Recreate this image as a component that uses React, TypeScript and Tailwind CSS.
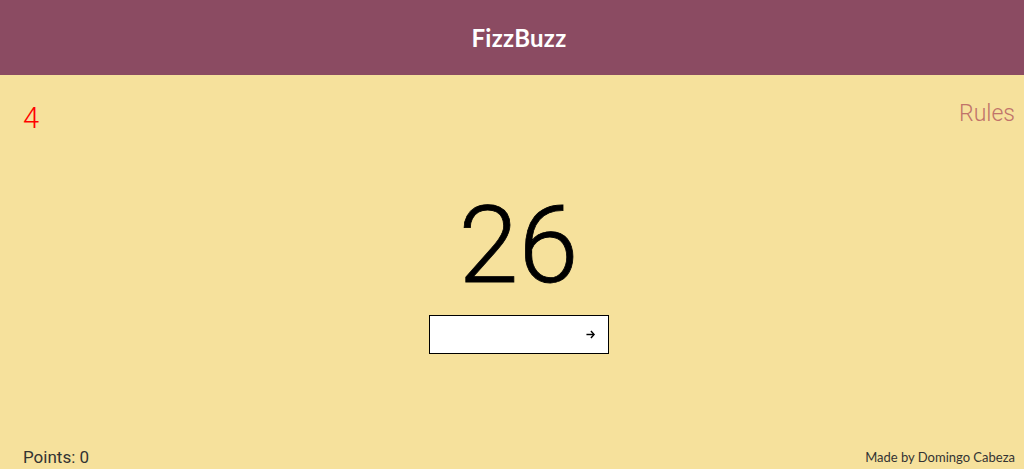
import { useState } from 'react';

const App = () => {
  const [value, setValue] = useState('');

  return (
    <div className="w-full h-[469px] overflow-hidden bg-[#f6e19c] flex flex-col font-['Roboto',sans-serif]">
      <header className="h-[75px] shrink-0 bg-[#8b4b62] flex items-center justify-center pl-[14px]">
        <h1 className="text-white text-[24px] font-bold font-['Lato',sans-serif] tracking-[0.3px]">FizzBuzz</h1>
      </header>

      <main className="flex-1 flex flex-col">
        <div className="flex justify-between items-start pl-[23px] pr-[9px] pt-[29px]">
          <span className="text-[#ff0000] text-[29px] font-light leading-none">4</span>
          <button className="text-[#c0736a] text-[23px] font-light leading-none -mt-[2px]">Rules</button>
        </div>

        <div className="flex flex-col items-center mt-[58px] pl-[13px]">
          <div className="text-black text-[108px] font-light leading-none [-webkit-text-stroke:0.8px_black]">26</div>
          <form
            className="mt-[16px] w-[180px] h-[39px] bg-white border border-black flex items-center"
            onSubmit={(e) => e.preventDefault()}
          >
            <input
              value={value}
              onChange={(e) => setValue(e.target.value)}
              className="flex-1 min-w-0 h-full px-2 outline-none bg-transparent text-sm"
            />
            <button type="submit" className="w-[22px] h-full flex items-center justify-start">
              <svg width="9" height="9" viewBox="0 0 10 10" fill="none" stroke="black" strokeWidth="1.6">
                <path d="M0.5 5 H9" />
                <path d="M5.5 1.2 L9 5 L5.5 8.8" />
              </svg>
            </button>
          </form>
        </div>

        <div className="mt-auto flex justify-between items-end pl-[23px] pr-[9px] pb-[1px]">
          <span className="text-[#333] text-[17px] leading-[22px]">Points: 0</span>
          <span className="text-[#333] text-[13px] leading-[18px] mb-[2px] font-['Lato',sans-serif]">Made by Domingo Cabeza</span>
        </div>
      </main>
    </div>
  );
};

export default App;
